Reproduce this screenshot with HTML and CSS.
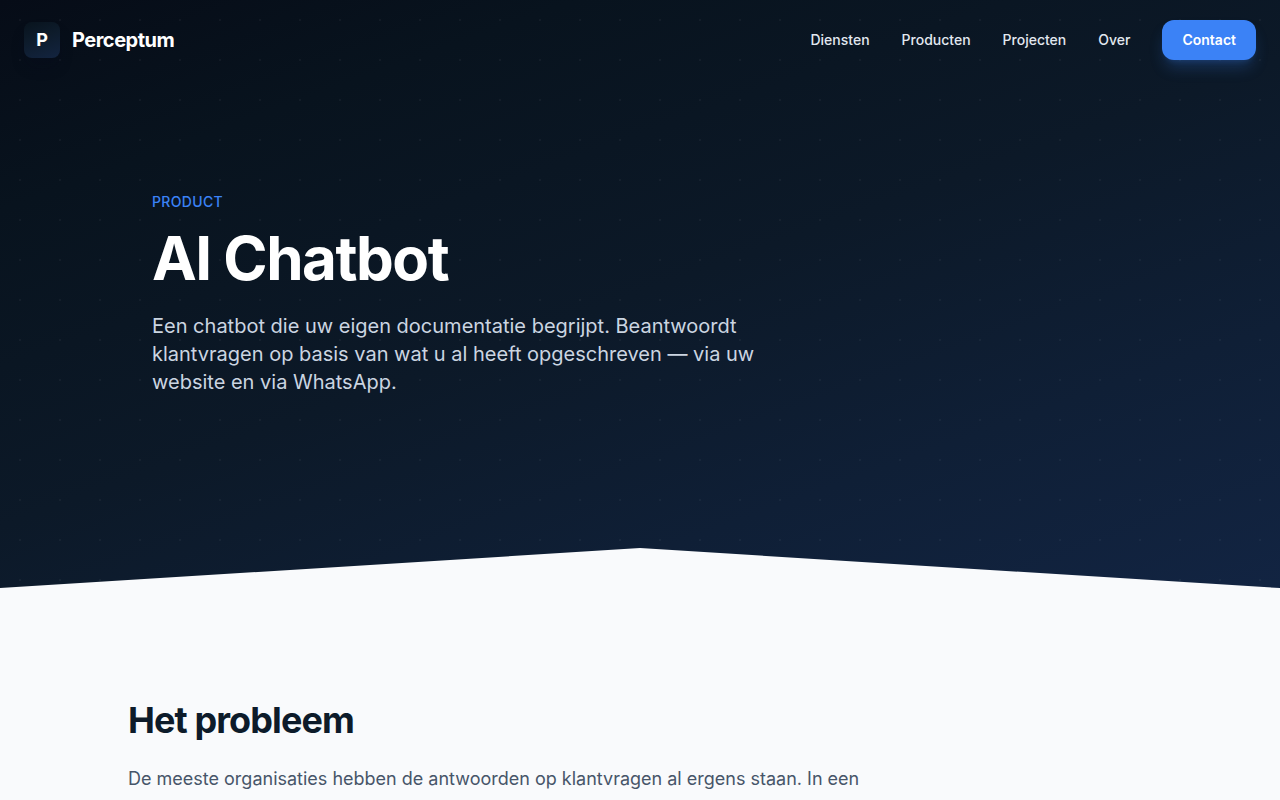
FILE: index.html
```html
<!DOCTYPE html>
<html lang="nl">
<head>
    <meta charset="UTF-8">
    <meta name="viewport" content="width=device-width, initial-scale=1.0">
    <title>AI Chatbot - Perceptum</title>
    <link rel="stylesheet" href="styles.css">
</head>
<body>
    <header class="navbar">
        <a href="#" class="logo">
            <span class="logo-icon">P</span>
            <span class="logo-text">Perceptum</span>
        </a>
        <nav class="nav-links">
            <a href="#diensten">Diensten</a>
            <a href="#producten">Producten</a>
            <a href="#projecten">Projecten</a>
            <a href="#over">Over</a>
            <a href="#contact" class="nav-cta">Contact</a>
        </nav>
    </header>

    <main>
        <section class="hero">
            <div class="hero-content">
                <p class="hero-label">Product</p>
                <h1>AI Chatbot</h1>
                <p class="hero-text">Een chatbot die uw eigen documentatie begrijpt. Beantwoordt klantvragen op basis van wat u al heeft opgeschreven — via uw website en via WhatsApp.</p>
            </div>
        </section>

        <section class="content">
            <h2>Het probleem</h2>
            <p>De meeste organisaties hebben de antwoorden op klantvragen al ergens staan. In een</p>
        </section>
    </main>
</body>
</html>
```
FILE: styles.css
```css
* {
    margin: 0;
    padding: 0;
    box-sizing: border-box;
}
body {
    font-family: Inter, "Liberation Sans", sans-serif;
    background: #f9fafc;
    color: #0d1b2a;
    overflow-x: hidden;
}
a { text-decoration: none; }

/* Navigation */
.navbar {
    position: absolute;
    top: 0;
    left: 0;
    right: 0;
    z-index: 10;
    display: flex;
    justify-content: space-between;
    align-items: center;
    padding: 20px 24px;
}
.logo {
    display: flex;
    align-items: center;
    gap: 12px;
    color: white;
}
.logo-icon {
    display: flex;
    align-items: center;
    justify-content: center;
    width: 36px;
    height: 36px;
    border-radius: 8px;
    background: linear-gradient(160deg, #08131d 0%, #0d1b2a 40%, #132440 100%);
    box-shadow: 0 10px 15px -3px rgba(5, 10, 30, 0.3);
    font-size: 18px;
    font-weight: 700;
    line-height: 28px;
}
.logo-text {
    font-size: 20px;
    font-weight: 700;
    letter-spacing: -0.025em;
}
.nav-links {
    display: flex;
    align-items: center;
    gap: 32px;
}
.nav-links a {
    color: #e2e8f0;
    font-size: 14px;
    font-weight: 500;
    line-height: 20px;
}
.nav-links .nav-cta {
    padding: 10px 20px;
    border-radius: 12px;
    background: #3b82f6;
    color: white;
    font-weight: 600;
    box-shadow: 0 10px 15px -3px rgba(59, 130, 246, 0.25), 0 4px 6px -4px rgba(59, 130, 246, 0.25);
}

/* Hero */
.hero {
    position: relative;
    padding: 192px 128px;
    background:
        radial-gradient(circle at center, rgba(255, 255, 255, 0.04) 1px, transparent 1px) 0 0 / 40px 40px,
        linear-gradient(160deg, #060c17 0%, #08131e 20%, #0c1928 50%, #0f1f36 75%, #122442 100%);
}
.hero::after {
    content: "";
    position: absolute;
    left: 0;
    right: 0;
    bottom: 0;
    height: 40px;
    background: #f9fafc;
    clip-path: polygon(0 100%, 50% 0, 100% 100%);
}
.hero-content {
    max-width: 672px;
    padding: 0 24px;
}
.hero-label {
    margin-bottom: 12px;
    color: #3b82f6;
    font-size: 14px;
    font-weight: 500;
    line-height: 20px;
    letter-spacing: 0.025em;
    text-transform: uppercase;
}
.hero h1 {
    margin-bottom: 20px;
    color: white;
    font-size: 60px;
    font-weight: 700;
    line-height: 68px;
    letter-spacing: -0.025em;
}
.hero-text {
    color: #cbd5e1;
    font-size: 20px;
    line-height: 28px;
}

/* Content */
.content {
    max-width: 1024px;
    margin: 0 auto;
    padding: 108px 0 96px;
}
.content h2 {
    margin-bottom: 20px;
    font-size: 36px;
    font-weight: 700;
    line-height: 48px;
    letter-spacing: -0.025em;
}
.content p {
    max-width: 768px;
    color: #475569;
    font-size: 18px;
    line-height: 30px;
}
```
